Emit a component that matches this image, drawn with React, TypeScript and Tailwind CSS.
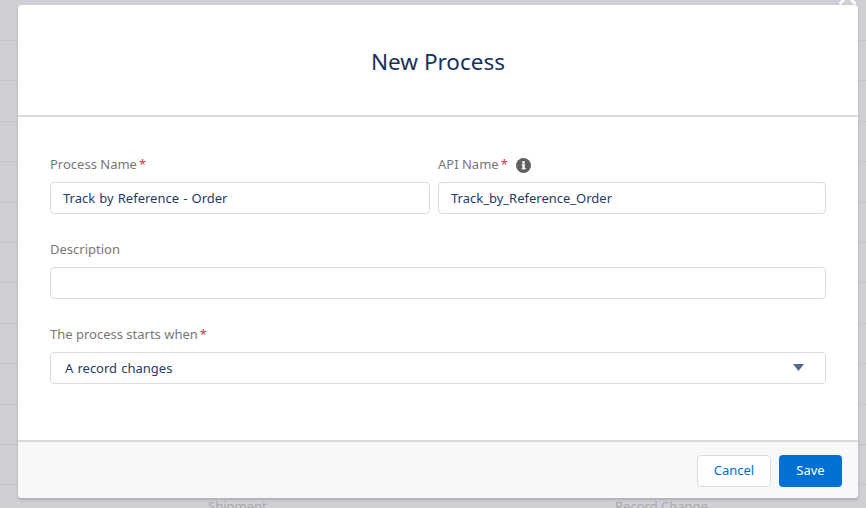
const font = { fontFamily: '"Noto Sans", "Open Sans", sans-serif' };

function Label({ text, required, info }: { text: string; required?: boolean; info?: boolean }) {
  return (
    <div className="flex h-[18px] items-center text-[13px] leading-[18px] text-[#797774]">
      <span>{text}</span>
      {required && <span className="ml-[2px] text-[#e0304a]">*</span>}
      {info && (
        <span className="ml-[8px] mt-[3px] flex">
          <svg width="15" height="15" viewBox="0 0 15 15">
            <circle cx="7.5" cy="7.5" r="7.5" fill="#5f5f5f" />
            <rect x="6.4" y="6.6" width="2.4" height="4.4" fill="#fff" />
            <rect x="5.6" y="6.2" width="3.2" height="1.2" fill="#fff" />
            <rect x="5.6" y="10.2" width="4.2" height="1.2" fill="#fff" />
            <circle cx="7.5" cy="4.4" r="1.3" fill="#fff" />
          </svg>
        </span>
      )}
    </div>
  );
}

function Input({ value, className = "" }: { value?: string; className?: string }) {
  return (
    <div className={`flex h-[32px] items-center rounded-[4px] border border-[#dddbda] bg-white px-[12px] pt-[2px] text-[13px] text-[#1f3b63] ${className}`}>
      {value}
    </div>
  );
}

export default function App() {
  const rows = Array.from({ length: 12 });
  return (
    <div className="relative h-[508px] w-[866px] overflow-hidden bg-[#cfd0d5]" style={font}>
      <div className="flex flex-col pt-[40px]">
        {rows.map((_, i) => (
          <div key={i} className="h-[40.4px] shrink-0 border-t border-[#c4c5ca]" />
        ))}
      </div>
      <div className="absolute left-[208px] top-[497px] text-[13px] text-[#a8a9ad]">Shipment</div>
      <div className="absolute left-[615px] top-[497px] text-[13px] text-[#a8a9ad]">Record Change</div>

      <svg className="absolute left-[835px] top-[-16px]" width="25" height="24" viewBox="0 0 25 24">
        <path d="M4.5 4 L20.5 20 M20.5 4 L4.5 20" stroke="#fff" strokeWidth="2.5" />
      </svg>

      <div className="absolute left-[18px] top-[5px] flex h-[493px] w-[840px] flex-col overflow-hidden rounded-[4px] bg-white shadow-[0_2px_3px_rgba(0,0,0,0.16)]">
        <header className="flex h-[112px] shrink-0 items-center justify-center border-b-2 border-[#d9d9d9] pt-[2px] text-[#16325c]">
          <span className="text-[22.5px] leading-[25px]">New Process</span>
        </header>

        <div className="flex flex-1 flex-col px-[32px] pt-[38px]">
          <div className="flex gap-[8px]">
            <div className="flex w-[380px] flex-col gap-[9px]">
              <Label text="Process Name" required />
              <Input value="Track by Reference - Order" className="[word-spacing:0.75px]" />
            </div>
            <div className="flex w-[388px] flex-col gap-[9px]">
              <Label text="API Name" required info />
              <Input value="Track_by_Reference_Order" />
            </div>
          </div>
          <div className="mt-[26px] flex flex-col gap-[9px]">
            <Label text="Description" />
            <Input />
          </div>
          <div className="mt-[26px] flex flex-col gap-[9px]">
            <Label text="The process starts when" required />
            <div className="flex h-[32px] items-center justify-between rounded-[4px] border border-[#dddbda] bg-white pl-[14px] pr-[21px] pt-[2px] text-[13px] text-[#1f3b63] [word-spacing:0.75px]">
              <span>A record changes</span>
              <svg className="mb-[3px]" width="11" height="7" viewBox="0 0 11 7">
                <path d="M0 0 H11 L5.5 7 Z" fill="#54698d" />
              </svg>
            </div>
          </div>
        </div>

        <footer className="flex h-[58px] shrink-0 items-center justify-end gap-[8px] border-t-2 border-[#d9d9d9] bg-[#f8f8f8] pr-[16px] pt-[1px]">
          <button className="h-[32px] w-[74px] rounded-[4px] border border-[#dddbda] bg-white text-[13px] text-[#0070d2]">Cancel</button>
          <button className="h-[32px] w-[63px] rounded-[4px] bg-[#0070d2] text-[13px] text-white">Save</button>
        </footer>
      </div>
    </div>
  );
}
